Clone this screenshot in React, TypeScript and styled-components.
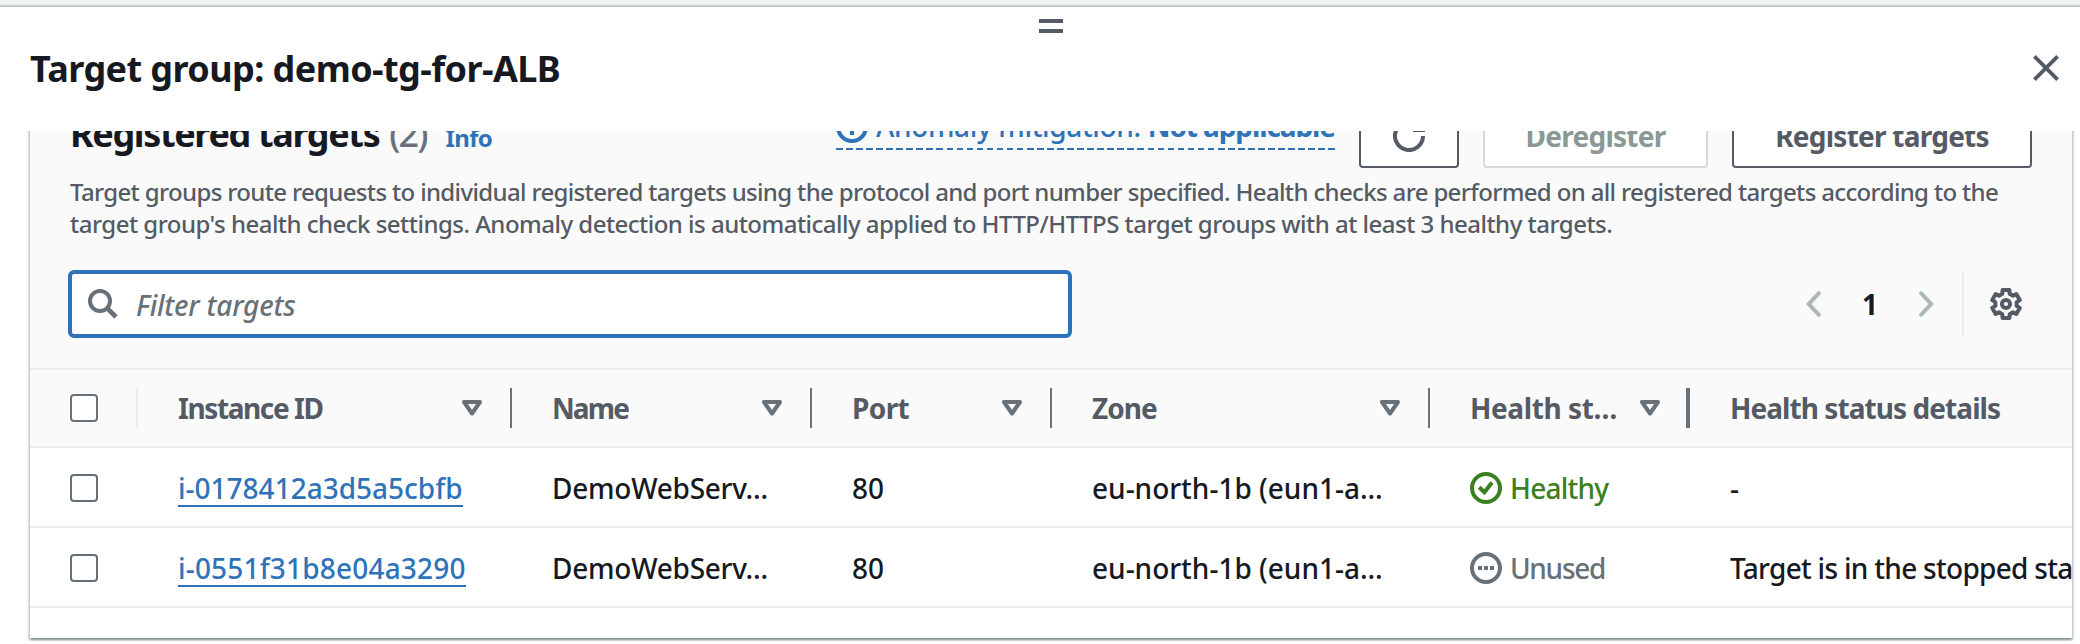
import React from "react";
import styled, { createGlobalStyle, css } from "styled-components";

const color = {
  text: "#16191f",
  secondary: "#545b64",
  muted: "#687078",
  link: "#2e73b8",
  success: "#3b7f20",
  divider: "#eaeded",
  disabled: "#aab7b8",
};

const columns = "108px 374px 300px 240px 378px 260px 1fr";

const GlobalStyle = createGlobalStyle`
  *, *::before, *::after { box-sizing: border-box; }
  body {
    margin: 0;
    background: #fff;
    color: ${color.text};
    font: 500 28px/44px "Noto Sans", "Open Sans", sans-serif;
    overflow: hidden;
  }
  svg { display: block; flex: none; }
`;

const Page = styled.div`
  display: flex;
  flex-direction: column;
  height: 644px;
  overflow: hidden;
`;

const PageEdge = styled.div`
  flex: none;
  height: 7px;
  background: linear-gradient(#f2f3f3 0 4px, #e6e9e9 4px 5px, #d3d8d9 5px 6px, #b9c0c4 6px 7px);
`;

const PanelHeader = styled.header`
  flex: none;
  display: flex;
  flex-direction: column;
  height: 124px;
  padding: 12px 21px 0 30px;
`;

const Handle = styled.div`
  align-self: center;
  width: 24px;
  height: 14px;
  margin-left: 13px;
  border: solid ${color.secondary};
  border-width: 4px 0;
`;

const TitleRow = styled.div`
  display: flex;
  justify-content: space-between;
  align-items: flex-start;
  margin-top: 14px;
`;

const Title = styled.h1`
  margin: 0;
  font-size: 36px;
  line-height: 44px;
  font-weight: 700;
  letter-spacing: -0.58px;
`;

const IconButton = styled.button`
  display: flex;
  padding: 0;
  border: 0;
  background: none;
  color: ${color.secondary};
`;

const CloseButton = styled(IconButton)`
  margin-top: 8px;
`;

const Viewport = styled.main`
  flex: 1;
  min-height: 0;
  overflow: hidden;
  padding: 0 8px 0 30px;
`;

const Card = styled.section`
  height: 534px;
  margin-top: -27px;
  background: #fff;
  box-shadow: 0 2px 2px 0 rgba(0, 28, 36, 0.3), 2px 2px 2px 0 rgba(0, 28, 36, 0.15),
    -2px 2px 2px 0 rgba(0, 28, 36, 0.15);
`;

const CardHeader = styled.div`
  height: 264px;
  padding: 0 40px;
  background: #fafafa;
`;

const HeadingRow = styled.div`
  display: flex;
  align-items: flex-start;
  justify-content: space-between;
  height: 64px;
`;

const Heading = styled.h2`
  display: flex;
  align-items: baseline;
  margin: 8px 0 0;
  font-size: 36px;
  line-height: 44px;
  font-weight: 700;
  letter-spacing: -1.35px;
`;

const Counter = styled.span`
  margin-left: 10px;
  font-weight: 500;
  letter-spacing: -2px;
  color: ${color.muted};
`;

const InfoLink = styled.a`
  margin-left: 19px;
  font-size: 24px;
  letter-spacing: -0.6px;
  color: ${color.link};
`;

const Actions = styled.div`
  display: flex;
  gap: 24px;
`;

const Mitigation = styled.a`
  display: flex;
  align-items: center;
  gap: 8px;
  width: 499px;
  height: 46px;
  color: ${color.link};
  white-space: nowrap;
  background: repeating-linear-gradient(90deg, ${color.link} 0 6.6px, transparent 6.6px 10.05px) left
    bottom / 100% 2px no-repeat;

  span {
    height: 46px;
    letter-spacing: -0.35px;
  }

  b {
    letter-spacing: -1.1px;
  }
`;

const Button = styled.button<{ $width: number; $disabled?: boolean }>`
  display: flex;
  align-items: center;
  justify-content: center;
  width: ${(p) => p.$width}px;
  height: 64px;
  padding: 0;
  border: 2px solid ${(p) => (p.$disabled ? "#d5dbdb" : color.secondary)};
  border-radius: 4px;
  background: #fff;
  color: ${(p) => (p.$disabled ? "#8b9898" : color.secondary)};
  font: 700 28px/44px "Noto Sans", "Open Sans", sans-serif;
  letter-spacing: -0.75px;
`;

const Description = styled.p`
  margin: 8px 0 0;
  font-size: 24px;
  line-height: 32px;
  color: ${color.secondary};
  white-space: nowrap;
`;

const Line = styled.span<{ $tracking: number }>`
  display: block;
  letter-spacing: ${(p) => p.$tracking}px;
`;

const ToolRow = styled.div`
  display: flex;
  align-items: center;
  justify-content: space-between;
  height: 68px;
  margin: 30px 10px 0 -2px;
`;

const SearchField = styled.label`
  display: flex;
  align-items: center;
  gap: 18px;
  width: 1004px;
  height: 68px;
  padding: 0 16px;
  border: 4px solid ${color.link};
  border-radius: 6px;
  background: #fff;
  color: ${color.muted};
`;

const SearchInput = styled.input`
  flex: 1;
  border: 0;
  padding: 2px 0 0;
  outline: 0;
  background: none;
  font: 500 28px/44px "Noto Sans", "Open Sans", sans-serif;

  &::placeholder {
    color: ${color.muted};
    font-style: italic;
    letter-spacing: -0.2px;
    opacity: 1;
  }
`;

const Pager = styled.div`
  display: flex;
  align-items: center;
  color: ${color.disabled};
`;

const PageNumber = styled.b`
  width: 96px;
  text-align: center;
  color: ${color.text};
`;

const PagerDivider = styled.div`
  width: 2px;
  height: 64px;
  margin: 0 26px 0 28px;
  background: ${color.divider};
`;

const Row = styled.div<{ $head?: boolean }>`
  display: grid;
  grid-template-columns: ${columns};
  align-items: center;
  height: 80px;
  padding-top: 2px;
  border-bottom: 2px solid ${color.divider};
  overflow: hidden;
  white-space: nowrap;
  ${(p) =>
    p.$head &&
    css`
      padding-top: 0;
      background: #fafafa;
      border-top: 2px solid ${color.divider};
      color: ${color.secondary};
      font-weight: 700;
    `}
`;

const Cell = styled.div<{ $tracking?: number }>`
  display: flex;
  align-items: center;
  min-width: 0;
  padding-left: 40px;
  letter-spacing: ${(p) => p.$tracking ?? 0}px;
`;

const HeadCell = styled(Cell)`
  justify-content: space-between;
  height: 40px;
`;

const SortHandle = styled.div<{ $active?: boolean }>`
  display: flex;
  align-items: center;
  gap: ${(p) => (p.$active ? 26 : 28)}px;
  color: ${color.muted};

  &::after {
    content: "";
    width: ${(p) => (p.$active ? 4 : 2)}px;
    height: 40px;
    background: ${color.muted};
  }
`;

const SelectCell = styled(Cell)<{ $head?: boolean }>`
  height: 40px;
  border-right: 2px solid ${(p) => (p.$head ? color.divider : "transparent")};
`;

const Checkbox = styled.span`
  width: 28px;
  height: 28px;
  border: 2px solid ${color.muted};
  border-radius: 4px;
  background: #fff;
`;

const InstanceLink = styled.a`
  height: 41px;
  line-height: 44px;
  margin-top: -3px;
  border-bottom: 2px solid ${color.link};
  color: ${color.link};
`;

const Status = styled.span<{ $tone: string }>`
  display: flex;
  align-items: center;
  gap: 8px;
  color: ${(p) => p.$tone};
`;

const stroke = { fill: "none", stroke: "currentColor", strokeWidth: 4 } as const;

const CloseIcon = () => (
  <svg width="26" height="26" viewBox="0 0 26 26" {...stroke}>
    <path d="M1.4 1.4 24.6 24.6M24.6 1.4 1.4 24.6" strokeWidth="3.8" />
  </svg>
);

const InfoIcon = () => (
  <svg width="32" height="32" viewBox="0 0 32 32" {...stroke}>
    <circle cx="16" cy="16" r="14" />
    <path d="M16 8v4M16 14v10" />
  </svg>
);

const RefreshIcon = () => (
  <svg width="32" height="32" viewBox="0 0 32 32" {...stroke}>
    <path d="M30 16A14 14 0 1 1 25 5.3L28 9" />
    <path d="M30 0v10H20" />
  </svg>
);

const SearchIcon = () => (
  <svg width="30" height="30" viewBox="0 0 30 30" {...stroke}>
    <circle cx="12" cy="12" r="10" />
    <path d="m19 19 9 9" strokeWidth="4.6" />
  </svg>
);

const Chevron = ({ d }: { d: string }) => (
  <svg width="16" height="28" viewBox="0 0 16 28" {...stroke}>
    <path d={d} />
  </svg>
);

const gearOutline = Array.from({ length: 6 }, (_, tooth) =>
  [
    [-20, 10.8],
    [-14, 14.3],
    [14, 14.3],
    [20, 10.8],
  ].map(([offset, radius]) => {
    const angle = ((tooth * 60 - 90 + offset) * Math.PI) / 180;
    return `${(16 + radius * Math.cos(angle)).toFixed(2)},${(16 + radius * Math.sin(angle)).toFixed(2)}`;
  }),
)
  .flat()
  .join(" ");

const GearIcon = () => (
  <svg width="32" height="32" viewBox="0 0 32 32" {...stroke} strokeLinejoin="round">
    <polygon points={gearOutline} />
    <circle cx="16" cy="16" r="4.1" />
  </svg>
);

const SortIcon = () => (
  <svg width="20" height="16" viewBox="0 0 20 16" {...stroke} strokeLinejoin="round">
    <path d="M2 2h16l-8 11.5z" />
  </svg>
);

const HealthyIcon = () => (
  <svg width="32" height="32" viewBox="0 0 32 32" {...stroke}>
    <circle cx="16" cy="16" r="14" />
    <path d="m9.2 15.2 5.2 5 7.6-9.8" />
  </svg>
);

const UnusedIcon = () => (
  <svg width="32" height="32" viewBox="0 0 32 32" {...stroke}>
    <circle cx="16" cy="16" r="14" />
    <path d="M8 16h4M14 16h4M20 16h4" />
  </svg>
);

const headings = [
  { label: "Instance ID", tracking: -1.4 },
  { label: "Name", tracking: -1.9 },
  { label: "Port", tracking: -0.6 },
  { label: "Zone", tracking: -0.93 },
  { label: "Health st…", tracking: -0.4 },
];

const targets = [
  { id: "i-0178412a3d5a5cbfb", tracking: 0, healthy: true, details: "-" },
  { id: "i-0551f31b8e04a3290", tracking: 0.18, healthy: false, details: "Target is in the stopped state" },
];

export default function App() {
  return (
    <Page>
      <GlobalStyle />
      <PageEdge />
      <PanelHeader>
        <Handle />
        <TitleRow>
          <Title>Target group: demo-tg-for-ALB</Title>
          <CloseButton aria-label="Close">
            <CloseIcon />
          </CloseButton>
        </TitleRow>
      </PanelHeader>
      <Viewport>
        <Card>
          <CardHeader>
            <HeadingRow>
              <Heading>
                Registered targets
                <Counter>(2)</Counter>
                <InfoLink>Info</InfoLink>
              </Heading>
              <Actions>
                <Mitigation>
                  <InfoIcon />
                  <span>
                    Anomaly mitigation: <b>Not applicable</b>
                  </span>
                </Mitigation>
                <Button $width={100} aria-label="Refresh">
                  <RefreshIcon />
                </Button>
                <Button $width={225} $disabled>
                  Deregister
                </Button>
                <Button $width={300}>Register targets</Button>
              </Actions>
            </HeadingRow>
            <Description>
              <Line $tracking={-0.65}>
                Target groups route requests to individual registered targets using the protocol and port number
                specified. Health checks are performed on all registered targets according to the
              </Line>
              <Line $tracking={-0.52}>
                target group's health check settings. Anomaly detection is automatically applied to HTTP/HTTPS target
                groups with at least 3 healthy targets.
              </Line>
            </Description>
            <ToolRow>
              <SearchField>
                <SearchIcon />
                <SearchInput placeholder="Filter targets" />
              </SearchField>
              <Pager>
                <Chevron d="M14 2 2.8 14 14 26" />
                <PageNumber>1</PageNumber>
                <Chevron d="M2 2l11.2 12L2 26" />
                <PagerDivider />
                <IconButton aria-label="Preferences">
                  <GearIcon />
                </IconButton>
              </Pager>
            </ToolRow>
          </CardHeader>
          <Row $head>
            <SelectCell $head>
              <Checkbox />
            </SelectCell>
            {headings.map(({ label, tracking }, i) => (
              <HeadCell key={label} $tracking={tracking}>
                {label}
                <SortHandle $active={i === headings.length - 1}>
                  <SortIcon />
                </SortHandle>
              </HeadCell>
            ))}
            <HeadCell $tracking={-0.93}>Health status details</HeadCell>
          </Row>
          {targets.map((target) => (
            <Row key={target.id}>
              <SelectCell>
                <Checkbox />
              </SelectCell>
              <Cell $tracking={target.tracking}>
                <InstanceLink>{target.id}</InstanceLink>
              </Cell>
              <Cell $tracking={-0.25}>DemoWebServ…</Cell>
              <Cell>80</Cell>
              <Cell>eu-north-1b (eun1-a…</Cell>
              <Cell $tracking={target.healthy ? -0.75 : -1.3}>
                <Status $tone={target.healthy ? color.success : color.muted}>
                  {target.healthy ? <HealthyIcon /> : <UnusedIcon />}
                  {target.healthy ? "Healthy" : "Unused"}
                </Status>
              </Cell>
              <Cell $tracking={-0.7}>{target.details}</Cell>
            </Row>
          ))}
        </Card>
      </Viewport>
    </Page>
  );
}
